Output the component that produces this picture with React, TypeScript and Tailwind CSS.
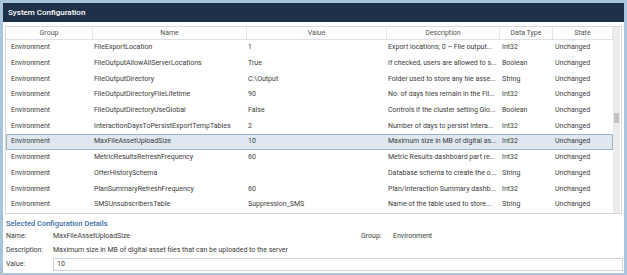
import React from "react";

const rows = [
  ["Environment", "FileExportLocation", "1", "Export locations; 0 – File output...", "Int32", "Unchanged"],
  ["Environment", "FileOutputAllowAllServerLocations", "True", "If checked, users are allowed to s...", "Boolean", "Unchanged"],
  ["Environment", "FileOutputDirectory", "C:\\Output", "Folder used to store any file asse...", "String", "Unchanged"],
  ["Environment", "FileOutputDirectoryFileLifetime", "90", "No. of days files remain in the Fil...", "Int32", "Unchanged"],
  ["Environment", "FileOutputDirectoryUseGlobal", "False", "Controls if the cluster setting Glo...", "Boolean", "Unchanged"],
  ["Environment", "InteractionDaysToPersistExportTempTables", "2", "Number of days to persist intera...", "Int32", "Unchanged"],
  ["Environment", "MaxFileAssetUploadSize", "10", "Maximum size in MB of digital as...", "Int32", "Unchanged"],
  ["Environment", "MetricResultsRefreshFrequency", "60", "Metric Results dashboard part re...", "Int32", "Unchanged"],
  ["Environment", "OfferHistorySchema", "", "Database schema to create the o...", "String", "Unchanged"],
  ["Environment", "PlanSummaryRefreshFrequency", "60", "Plan/Interaction Summary dashb...", "Int32", "Unchanged"],
  ["Environment", "SMSUnsubscribersTable", "Suppression_SMS", "Name of the table used to store...", "String", "Unchanged"],
];

export default function App() {
  return (
    <div
      className="w-[627px] h-[275px] bg-[#a9c4dd] p-[3px] pb-[2px] text-[#3c3c3c] text-[7px] leading-none"
      style={{ fontFamily: "Roboto, 'Liberation Sans', sans-serif" }}
    >
      <div className="h-full bg-white flex flex-col">
        <div className="h-[19px] shrink-0 bg-[#1f3148] flex items-center pl-[5px] text-white text-[8px] font-medium">
          System Configuration
        </div>
        <div className="mx-[2px] mt-[4px] h-[188px] shrink-0 border border-[#d4d9de] flex overflow-hidden">
          <div className="flex-1 flex flex-col">
            <div className="flex h-[13px] shrink-0 border-b border-[#dde1e5] text-[#555]">
              {[
                ["Group", "w-[87px]"],
                ["Name", "w-[154px]"],
                ["Value", "w-[140px]"],
                ["Description", "w-[113px]"],
                ["Data Type", "w-[53px]"],
                ["State", "w-[60px]"],
              ].map(([h, w]) => (
                <div key={h} className={`${w} shrink-0 h-full flex items-center justify-center border-r border-[#e3e6e9]`}>
                  {h}
                </div>
              ))}
            </div>
            {rows.map((r, i) => {
              const sel = i === 6;
              return (
                <div key={i} className="relative flex h-[15.7px] shrink-0 items-center whitespace-nowrap">
                  {sel && <div className="absolute inset-0 bg-[#dfe8f1] border border-[#9fb4c8]" />}
                  <div className="relative w-[87px] shrink-0 pl-[5px] overflow-hidden">{r[0]}</div>
                  <div className="relative w-[154px] shrink-0 pl-[1px] overflow-hidden">{r[1]}</div>
                  <div className="relative w-[140px] shrink-0 pl-[1px] overflow-hidden">{r[2]}</div>
                  <div className="relative w-[113px] shrink-0 pl-[1px] overflow-hidden">{r[3]}</div>
                  <div className="relative w-[53px] shrink-0 pl-[2px] overflow-hidden">{r[4]}</div>
                  <div className="relative w-[60px] shrink-0 pl-[2px] overflow-hidden">{r[5]}</div>
                </div>
              );
            })}
          </div>
          <div className="w-[8px] bg-[#ebebeb] relative mr-[1px]">
            <div className="absolute left-[1px] right-[1px] top-[86px] h-[10px] bg-[#c2c2c2]" />
          </div>
        </div>
        <div className="pl-[3px] mt-[6px] text-[#3a6ea8] text-[7.5px] font-medium">Selected Configuration Details</div>
        <div className="flex flex-col mt-[2px] pl-[3px] pr-[1px]">
          <div className="flex items-center h-[14px]">
            <div className="w-[47px]">Name:</div>
            <div className="w-[308px]">MaxFileAssetUploadSize</div>
            <div className="w-[32px]">Group:</div>
            <div>Environment</div>
          </div>
          <div className="flex items-center h-[14px]">
            <div className="w-[47px]">Description:</div>
            <div>Maximum size in MB of digital asset files that can be uploaded to the server</div>
          </div>
          <div className="flex items-center h-[14px]">
            <div className="w-[47px]">Value:</div>
            <div className="flex-1 h-[13px] border border-[#cfd4d9] flex items-center pl-[3px]">10</div>
          </div>
        </div>
      </div>
    </div>
  );
}
